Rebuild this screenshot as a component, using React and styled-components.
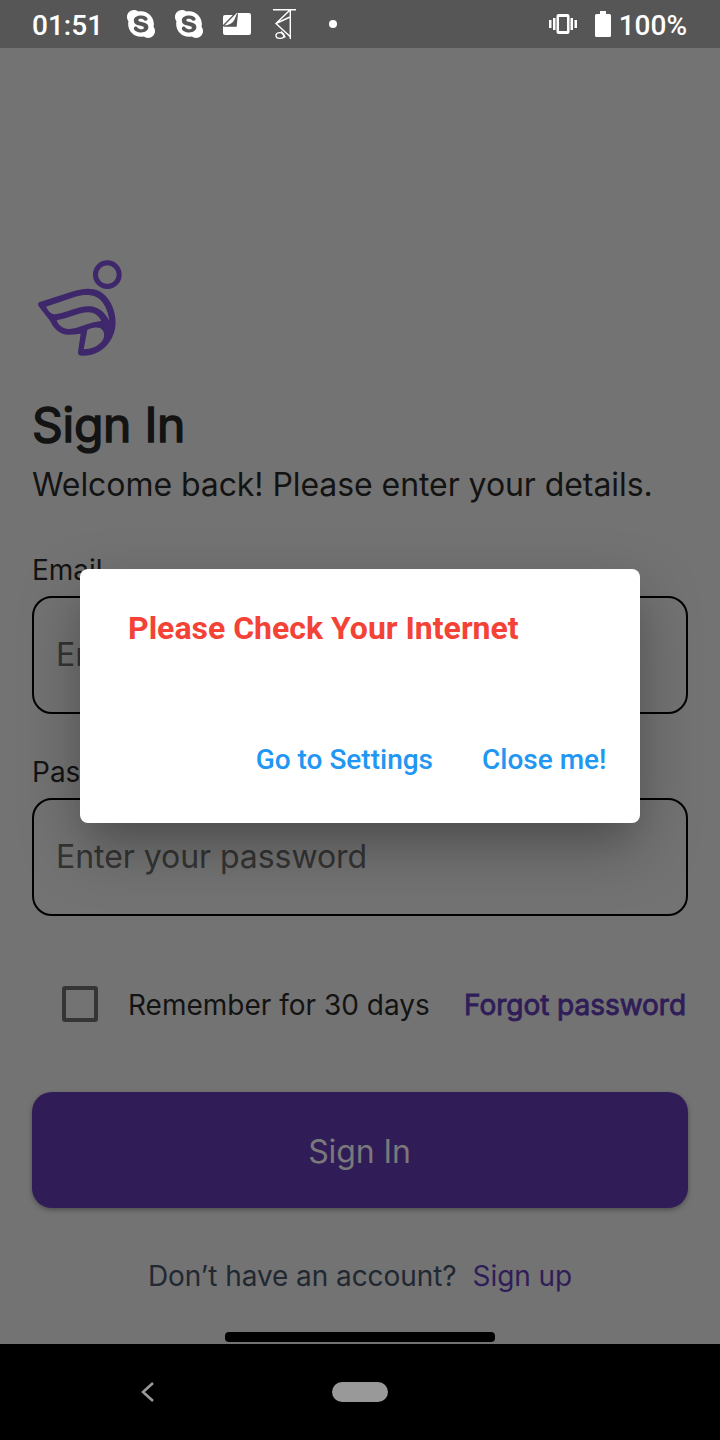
import React from "react";
import styled, { createGlobalStyle } from "styled-components";
import { FaSkype } from "react-icons/fa";

const GlobalStyle = createGlobalStyle`
  *, *::before, *::after { box-sizing: border-box; }
  body { margin: 0; background: #737373; }
`;

const Screen = styled.div`
  position: relative;
  display: flex;
  flex-direction: column;
  width: 720px;
  height: 1440px;
  overflow: hidden;
  background: #737373;
  color: #131313;
  font-family: Inter, "Liberation Sans", sans-serif;
  font-weight: 400;
  white-space: nowrap;
`;

const StatusBar = styled.header`
  display: flex;
  align-items: center;
  justify-content: space-between;
  flex: none;
  height: 48px;
  padding: 0 33px 0 32px;
  background: #565656;
  color: #ffffff;
  font: 500 28px/48px Roboto, sans-serif;
`;

const StatusGroup = styled.div`
  display: flex;
  align-items: center;
  gap: ${(p) => p.$gap}px;
  height: 48px;
`;

const Clock = styled.span`
  width: 77px;
  padding-top: 3px;
`;

const BatteryLevel = styled.span`
  padding-top: 3px;
  margin-left: -10px;
`;

const Content = styled.main`
  display: flex;
  flex-direction: column;
  flex: 1;
  padding: 208px 32px 0;
`;

const Logo = styled.svg`
  display: block;
  width: 96px;
  height: 104px;
`;

const Title = styled.h1`
  margin: 36px 0 0;
  font-size: 48px;
  line-height: 58px;
  font-weight: 400;
  letter-spacing: -0.25px;
  -webkit-text-stroke: 1.5px currentColor;
`;

const Subtitle = styled.p`
  margin: 11px 0 0;
  font-size: 32px;
  line-height: 40px;
  letter-spacing: -0.07px;
`;

const Field = styled.label`
  display: flex;
  flex-direction: column;
  gap: 9px;
  margin-top: ${(p) => p.$top}px;
`;

const FieldLabel = styled.span`
  font-size: 28px;
  line-height: 34px;
`;

const FieldBox = styled.span`
  display: flex;
  align-items: center;
  height: 118px;
  padding: 0 22px 2px;
  border: 2px solid #000000;
  border-radius: 20px;
  color: #343434;
  font-size: 32px;
  letter-spacing: -0.05px;
`;

const OptionsRow = styled.div`
  display: flex;
  align-items: center;
  height: 36px;
  margin-top: 70px;
  padding: 0 2px 0 30px;
  font-size: 28px;
  line-height: 34px;
`;

const Checkbox = styled.span`
  width: 36px;
  height: 36px;
  margin-right: 30px;
  border: 4px solid #353535;
  border-radius: 3px;
`;

const Remember = styled.span`
  padding-top: 2px;
`;

const ForgotLink = styled.a`
  margin-left: auto;
  padding-top: 2px;
  color: #301d58;
  letter-spacing: -0.03px;
  -webkit-text-stroke: 0.9px currentColor;
`;

const SubmitButton = styled.button`
  height: 116px;
  margin-top: 70px;
  padding: 4px 1px 0 0;
  border: 0;
  border-radius: 20px;
  background: #301d58;
  box-shadow: 0 2px 5px rgba(0, 0, 0, 0.32);
  color: #7b787a;
  font: 400 32px/40px Inter, sans-serif;
  letter-spacing: -0.1px;
`;

const SignUpRow = styled.div`
  display: flex;
  justify-content: center;
  gap: 16px;
  margin-top: 51px;
  color: #212832;
  font-size: 28px;
  line-height: 34px;
  letter-spacing: -0.07px;
`;

const SignUpLink = styled.a`
  color: #301d58;
`;

const HomeIndicator = styled.div`
  align-self: center;
  width: 270px;
  height: 10px;
  margin-top: auto;
  margin-bottom: 2px;
  border-radius: 4px;
  background: #000000;
`;

const NavBar = styled.nav`
  display: grid;
  grid-template-columns: 141px 191px 56px;
  align-items: center;
  flex: none;
  height: 96px;
  background: #000000;
`;

const BackIcon = styled.svg`
  grid-column: 2;
  width: 13px;
  height: 20px;
`;

const HomePill = styled.span`
  height: 20px;
  border-radius: 10px;
  background: #999999;
`;

const Dialog = styled.section`
  position: absolute;
  left: 80px;
  top: 569px;
  display: flex;
  flex-direction: column;
  justify-content: space-between;
  width: 560px;
  height: 254px;
  padding: 40px 33.5px 43px 48px;
  border-radius: 8px;
  background: #ffffff;
  box-shadow:
    0 22px 30px -14px rgba(0, 0, 0, 0.12),
    0 24px 62px 0 rgba(0, 0, 0, 0.27);
  font-family: Roboto, sans-serif;
`;

const DialogTitle = styled.h2`
  margin: 0;
  color: #f44336;
  font-size: 32px;
  line-height: 38px;
  font-weight: 700;
`;

const DialogActions = styled.div`
  display: flex;
  justify-content: flex-end;
  gap: 49px;
`;

const DialogAction = styled.button`
  padding: 0;
  border: 0;
  background: none;
  color: #2196f3;
  font: 500 28px/40px Roboto, sans-serif;
`;

const FolderSvg = styled.svg`
  margin-left: 2px;
`;

const GlyphSvg = styled.svg`
  margin-left: 6px;
`;

function FolderIcon() {
  return (
    <FolderSvg width="28" height="24" viewBox="0 0 28 24">
      <path fill="#fff" d="M14 1h12q2 0 2 2v18q0 2-2 2H2q-2 0-2-2V5q0-2 2-2h9q1-2 3-2z" />
      <path fill="#565656" d="M15 1.500L13.700 14.700H.800v-1.200Q9 13 11.500 7.500L14 1.500z" />
      <path fill="none" stroke="#565656" strokeWidth="1.300" d="M0 14L13 .800" />
    </FolderSvg>
  );
}

function GlyphIcon() {
  return (
    <GlyphSvg width="24" height="32" viewBox="0 0 24 32" fill="none" stroke="#fff" strokeWidth="1.4">
      <path d="M0 1.800h23M17.300 2v29M16.500 2.500L3 15.500L17 28.500M3 15.500L17 9" />
      <ellipse cx="7" cy="27.500" rx="4" ry="2.900" />
      <path d="M8 23.500l4.300 6" />
    </GlyphSvg>
  );
}

function VibrateIcon() {
  return (
    <svg width="28" height="20" viewBox="0 0 28 20" fill="#fff">
      <path fillRule="evenodd" d="M9.500 0h9q2 0 2 2v16q0 2-2 2h-9q-2 0-2-2V2q0-2 2-2zM10 3v14h8V3z" />
      <path d="M0 6h2.500v8H0zM4 4h2.500v12H4zM21.500 4H24v12h-2.500zM25.500 6H28v8h-2.500z" />
    </svg>
  );
}

export default function App() {
  return (
    <Screen>
      <GlobalStyle />
      <StatusBar>
        <StatusGroup $gap={16}>
          <Clock>01:51</Clock>
          <FaSkype size={32} />
          <FaSkype size={32} />
          <FolderIcon />
          <GlyphIcon />
          <svg width="44" height="10" viewBox="0 0 44 10">
            <circle cx="20" cy="5" r="4" fill="#fff" />
          </svg>
        </StatusGroup>
        <StatusGroup $gap={18}>
          <VibrateIcon />
          <svg width="16" height="26" viewBox="0 0 16 26">
            <path fill="#fff" d="M5 0h6v3h3.500q1.500 0 1.500 1.500v20q0 1.500-1.500 1.500h-13Q0 26 0 24.500v-20Q0 3 1.500 3H5z" />
          </svg>
          <BatteryLevel>100%</BatteryLevel>
        </StatusGroup>
      </StatusBar>
      <Content>
        <Logo viewBox="36 48 288 312">
          <circle cx="262" cy="104" r="35.500" fill="none" stroke="#3e276b" strokeWidth="15" />
          <path
            fill="#3e276b"
            fillRule="evenodd"
            d="M59 186L160 154C204 140 240 144 264 176C288 209 295 257 276 293C256 330 225 348 183 347Q173 346 174 336L182 281Q162 284 145 284C120 283 103 269 90 242L56 199Q51 190 59 186Z
               M78 200C87 216 93 222 106 223C138 219 174 198 208 199C236 200 253 216 268 242C264 209 249 181 229 171C211 163 188 164 166 170Z
               M110 241C116 258 130 268 148 267C178 265 202 248 244 243C235 225 220 215 200 217C174 220 146 234 110 241Z
               M202 270L191 328C214 328 234 320 248 301C257 286 252 270 240 264C228 260 212 263 202 270Z"
          />
        </Logo>
        <Title>Sign In</Title>
        <Subtitle>Welcome back! Please enter your details.</Subtitle>
        <Field $top={48}>
          <FieldLabel>Email</FieldLabel>
          <FieldBox>Enter your email</FieldBox>
        </Field>
        <Field $top={41}>
          <FieldLabel>Password</FieldLabel>
          <FieldBox>Enter your password</FieldBox>
        </Field>
        <OptionsRow>
          <Checkbox />
          <Remember>Remember for 30 days</Remember>
          <ForgotLink>Forgot password</ForgotLink>
        </OptionsRow>
        <SubmitButton>Sign In</SubmitButton>
        <SignUpRow>
          <span>Don’t have an account?</span>
          <SignUpLink>Sign up</SignUpLink>
        </SignUpRow>
        <HomeIndicator />
      </Content>
      <NavBar>
        <BackIcon viewBox="0 0 13 20">
          <path d="M12 1L2 10l10 9" fill="none" stroke="#999" strokeWidth="2.600" />
        </BackIcon>
        <HomePill />
      </NavBar>
      <Dialog>
        <DialogTitle>Please Check Your Internet</DialogTitle>
        <DialogActions>
          <DialogAction>Go to Settings</DialogAction>
          <DialogAction>Close me!</DialogAction>
        </DialogActions>
      </Dialog>
    </Screen>
  );
}
